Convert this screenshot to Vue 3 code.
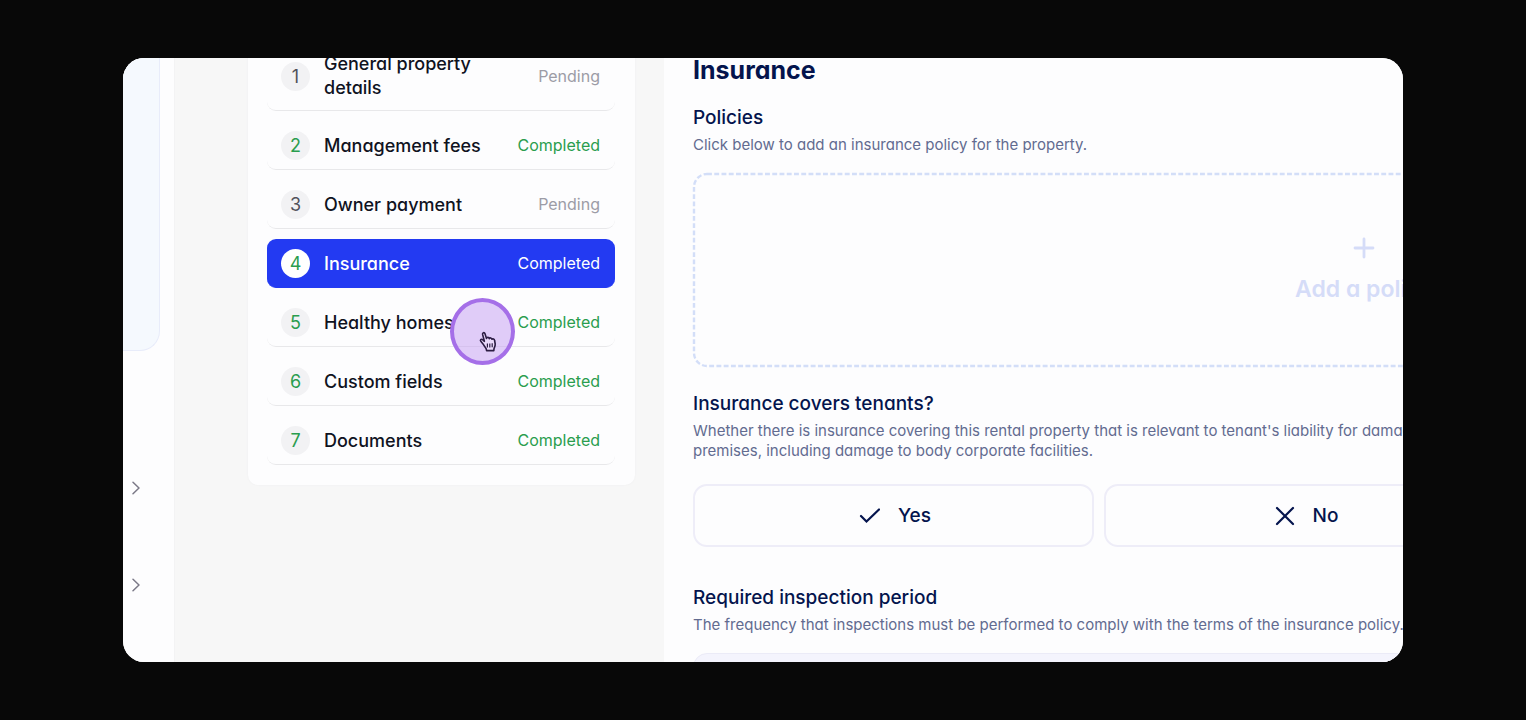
<script setup>
const steps = [
  { n: 1, label: 'General property details', status: 'Pending' },
  { n: 2, label: 'Management fees', status: 'Completed' },
  { n: 3, label: 'Owner payment', status: 'Pending' },
  { n: 4, label: 'Insurance', status: 'Completed', active: true },
  { n: 5, label: 'Healthy homes', status: 'Completed' },
  { n: 6, label: 'Custom fields', status: 'Completed' },
  { n: 7, label: 'Documents', status: 'Completed' },
]
</script>

<template>
  <div class="stage">
    <div class="window">
      <aside class="rail">
        <div class="rail-card"></div>
        <button v-for="i in 2" :key="i" class="expand" type="button" aria-label="Expand">
          <svg width="10" height="14" viewBox="0 0 10 14"><path d="M2 1.2 8 7 2 12.8" /></svg>
        </button>
      </aside>

      <div class="nav-area">
        <nav class="steps">
          <a
            v-for="s in steps"
            :key="s.n"
            href="#"
            class="step"
            :class="{ active: s.active, done: s.status === 'Completed' }"
          >
            <span class="num">{{ s.n }}</span>
            <span class="label">{{ s.label }}</span>
            <span class="status">{{ s.status }}</span>
          </a>
          <div class="pointer">
            <svg width="20" height="22" viewBox="0 0 20 22">
              <path
                d="M5.2 13.2 3 10.6C1.6 9 3.2 7.6 4.6 8.7L6.4 10.3 4.6 3.4C4.2 1.5 6.4 1 7 2.8L8.5 7.4C8.8 6 11 6 11.3 7.6 11.8 6.5 13.7 6.8 14 8.3 14.7 7.5 16.4 8 16.6 9.5L17.2 13C17.4 15 16.4 16.2 16 17.6L15.8 19.6H8.6L8.2 17.8C7.4 16.4 6 14.6 5.2 13.2Z"
              />
              <path class="lines" d="M9.4 12.5V16.5M11.8 12.4V16.4M14.2 12.3V16.2" />
            </svg>
          </div>
        </nav>
      </div>

      <main class="content">
        <h1>Insurance</h1>

        <section class="policies">
          <h2>Policies</h2>
          <p>Click below to add an insurance policy for the property.</p>
          <button class="add" type="button">
            <svg class="outline" width="100%" height="100%">
              <rect class="outline-rect" x="1" y="1" rx="13" stroke-width="2.4" stroke-dasharray="4.9 2.35" />
            </svg>
            <svg class="plus" width="22" height="22" viewBox="0 0 22 22"><path d="M11 2V20M2 11H20" /></svg>
            <span>Add a policy</span>
          </button>
        </section>

        <section class="covers">
          <h2>Insurance covers tenants?</h2>
          <p>
            Whether there is insurance covering this rental property that is relevant to tenant's
            liability for damage to the premises, including damage to body corporate facilities.
          </p>
          <div class="choices">
            <button class="choice" type="button">
              <svg width="22" height="22" viewBox="0 0 22 22"><path d="M3 11 8.5 16.5 21 4.5" /></svg>
              <span>Yes</span>
            </button>
            <button class="choice" type="button">
              <svg width="22" height="22" viewBox="0 0 22 22"><path d="M4 3 20 19M20 3 4 19" /></svg>
              <span>No</span>
            </button>
          </div>
        </section>

        <section class="period">
          <h2><label for="period">Required inspection period</label></h2>
          <p>The frequency that inspections must be performed to comply with the terms of the insurance policy.</p>
          <input id="period" class="field" type="text" />
        </section>
      </main>
    </div>
  </div>
</template>

<style>
body {
  background: #080808;
}
</style>

<style scoped>
* {
  box-sizing: border-box;
}
.stage {
  height: 100vh;
  padding: 58px 123px;
  background: #080808;
  font-family: Inter, 'Open Sans', sans-serif;
  font-feature-settings: 'cv11';
  color: #10131f;
}
.window {
  display: flex;
  height: 100%;
  overflow: hidden;
  border-radius: 21px;
  background: #f7f7f7;
}
button {
  font: inherit;
  font-feature-settings: inherit;
  background: none;
  cursor: pointer;
}
svg {
  display: block;
  flex: none;
  fill: none;
}

.rail {
  flex: none;
  width: 52px;
  background: #fdfdfe;
  border-right: 1px solid #f3f3f4;
}
.rail-card {
  width: 37px;
  height: 293px;
  margin-bottom: 124px;
  background: #f5f9fe;
  border: 1px solid #e8ecfa;
  border-width: 0 1px 1px 0;
  border-radius: 0 0 20px 0;
}
.expand {
  display: block;
  padding: 6px 8px;
  margin-bottom: 71px;
  border: 0;
}
.expand svg {
  stroke: #7b7987;
  stroke-width: 1.5;
  stroke-linecap: round;
  stroke-linejoin: round;
}

.nav-area {
  flex: none;
  padding: 0 29px 0 73px;
}
.steps {
  position: relative;
  display: flex;
  flex-direction: column;
  gap: 10px;
  width: 387px;
  margin-top: -37px;
  padding: 20px 20px 20px 19px;
  background: #fdfdfe;
  border-radius: 10px;
  box-shadow: 0 0 2px #ededee;
}
.step {
  display: flex;
  align-items: center;
  min-height: 49px;
  padding: 10px 15px 9px 14px;
  border-bottom: 1px solid #e8e8ea;
  border-radius: 9px;
  color: #10131f;
  text-decoration: none;
}
.num {
  display: flex;
  align-items: center;
  justify-content: center;
  flex: none;
  width: 29px;
  height: 29px;
  margin-right: 14px;
  border-radius: 50%;
  background: #f2f2f4;
  color: #52525b;
  font-size: 18px;
}
.label {
  flex: 1;
  padding: 1px 0;
  font-size: 18px;
  line-height: 24px;
  font-weight: 500;
}
.status {
  flex: none;
  margin-left: 30px;
  font-size: 16px;
  line-height: 21px;
  color: #9c9ca6;
}
.done .num,
.done .status {
  color: #2a9d4e;
}
.active {
  background: #233af2;
  border-color: #233af2;
}
.active .num {
  background: #fff;
}
.active .label,
.active .status {
  color: #fff;
}
.pointer {
  position: absolute;
  left: 202px;
  top: 277px;
  width: 65px;
  height: 67px;
  padding: 29px 0 0 24px;
  border: 4px solid #a56fe8;
  border-radius: 50%;
  background: rgba(195, 155, 241, 0.5);
}
.pointer path {
  fill: #ead9fb;
  stroke: #2c1c43;
  stroke-width: 1.6;
  stroke-linejoin: round;
}
.pointer .lines {
  stroke-width: 1.2;
}

.content {
  flex: 1;
  min-width: 0;
  padding-left: 29px;
  overflow: hidden;
  background: #fdfdfe;
  color: #04144d;
}
h1,
h2,
p {
  margin: 0;
}
h1 {
  margin-top: -7px;
  font-size: 25px;
  line-height: 38px;
  font-weight: 700;
}
h2 {
  font-size: 19px;
  line-height: 28px;
  font-weight: 500;
}
p {
  max-width: 812px;
  font-size: 15px;
  line-height: 20px;
  color: #626b90;
}
section {
  width: 1342px;
}
.policies {
  margin-top: 15px;
}
.policies p {
  margin: 3px 0 18px;
}
.add {
  position: relative;
  display: flex;
  flex-direction: column;
  align-items: center;
  justify-content: center;
  gap: 14px;
  width: 100%;
  height: 194px;
  padding: 2px 0 0;
  border: 0;
  color: #d5dcf8;
  font-size: 23px;
  line-height: 32px;
  font-weight: 600;
}
.outline {
  position: absolute;
  inset: 0;
  overflow: visible;
}
.outline-rect {
  width: calc(100% - 2px);
  height: calc(100% - 2px);
  stroke: #d3def8;
}
.plus {
  stroke: #d5dcf8;
  stroke-width: 2.8;
  stroke-linecap: round;
}
.covers {
  margin-top: 23px;
}
.covers p {
  margin: 3px 0 23px;
}
.choices {
  display: flex;
  gap: 10px;
}
.choice {
  display: flex;
  align-items: center;
  justify-content: center;
  gap: 18px;
  width: 401px;
  height: 63px;
  padding: 0 0 0 2px;
  border: 2px solid #eeedf8;
  border-radius: 14px;
  color: #04144d;
  font-size: 19px;
  font-weight: 500;
}
.choice svg {
  stroke: #04144d;
  stroke-width: 2.2;
  stroke-linecap: round;
}
.period {
  margin-top: 37px;
}
.period p {
  margin: 3px 0 18px;
}
.field {
  display: block;
  width: 812px;
  height: 56px;
  padding: 0 16px;
  border: 1px solid #ebebf7;
  border-radius: 14px;
  background: #f4f4fd;
  font: inherit;
}
</style>
